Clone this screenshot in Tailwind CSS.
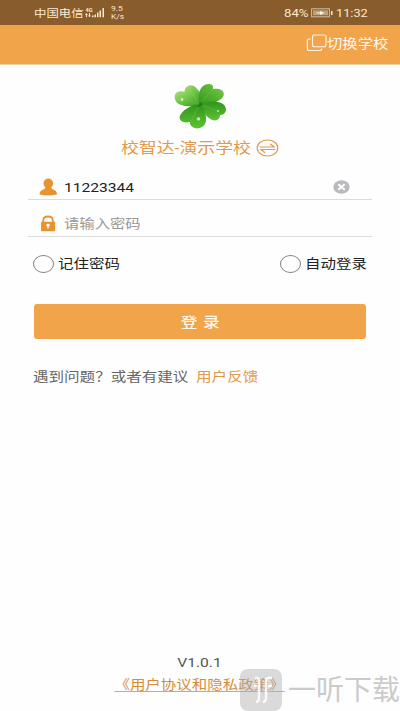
<!DOCTYPE html>
<html lang="zh-CN">
<head>
<meta charset="utf-8">
<title>登录</title>
<script src="https://cdn.jsdelivr.net/npm/@tailwindcss/browser@4"></script>
</head>
<body class="bg-white">
<div class="relative flex h-[711px] w-[400px] flex-col overflow-hidden bg-[#fefefe] font-[Roboto,'Noto_Sans_CJK_SC',sans-serif] whitespace-nowrap text-[13px]">
  <!-- Status bar -->
  <div class="flex h-[25px] shrink-0 items-center bg-[#895c2b] pl-[34px] text-[#fbe9d2]">
    <div class="w-[51px]"><span class="inline-block origin-left scale-x-[1.18] text-[10.5px] leading-4">中国电信</span></div>
    <svg class="h-[13px] w-[20px]" viewBox="0 0 20 13" fill="#fbe9d2">
      <text x="0.5" y="5.500" font-size="6" font-weight="700" font-family="Roboto" textLength="7" lengthAdjust="spacingAndGlyphs">4G</text>
      <path d="M1.4 7l1.5 2H2v2.200H1V9H0zM4.500 11.200L3 9.500h1V7h1v2.500h1zM7 9.500h1.500v1.700H7zM9.500 8.500H11v2.700H9.500zM12 6.500h1.500v4.700H12zM14.500 4.500H16v6.700h-1.500zM17.500 2H19v9.200h-1.500z"/>
    </svg>
    <div class="ml-[6px] w-[20px] text-[7px] leading-[8px]"><div class="origin-left scale-x-[1.2]">9.5</div><div class="origin-left scale-x-[1.2]">K/s</div></div>
    <div class="ml-[153px] w-[27px]"><span class="inline-block origin-left scale-x-[1.2] text-[11px]">84%</span></div>
    <svg class="h-[10px] w-[23px]" viewBox="0 0 23 10">
      <rect x="0.6" y="0.800" width="17.800" height="8" fill="none" stroke="#d5bea1"/>
      <rect x="2" y="2.300" width="15" height="5" fill="#bba07d"/>
      <path d="M5.500 4.500H9V3l4.500 2L9 7V5.500H5.500z" fill="#fff5e5"/><path d="M20 3h1.500v4H20z" fill="#fbe9d2"/>
    </svg>
    <div class="ml-[2px]"><span class="inline-block origin-left scale-x-[1.16] text-[11px]">11:32</span></div>
  </div>
  <!-- Title bar -->
  <div class="flex h-[40px] shrink-0 items-center border-b border-[#f0cf9f] bg-[#f2a44b] pb-[2px] pl-[306px] text-[#fff9ef]">
    <svg class="mb-[2px] h-[18px] w-[21px]" viewBox="0 0 21 18" fill="none" stroke="#fff6e8" stroke-width="1.1">
      <rect x="6.500" y="1" width="13.500" height="11.700" rx="2"/><path d="M4.500 5H3.200Q1.300 5 1.300 7v7.500q0 2 2 2h10.500q2 0 2-2"/>
    </svg>
    <div><span class="inline-block origin-left scale-x-[1.18] leading-5">切换学校</span></div>
  </div>
  <!-- School -->
  <div class="flex h-[66px] shrink-0 justify-center pt-[16px]">
    <svg class="h-[49px] w-[56px]" viewBox="0 0 56 49">
      <defs>
        <linearGradient id="a" x1="0" y1="0" x2="1" y2="1"><stop offset="0" stop-color="#a8df7c"/><stop offset=".5" stop-color="#6cc242"/><stop offset="1" stop-color="#34991f"/></linearGradient>
        <linearGradient id="b" x1="1" y1="0" x2="0" y2="1"><stop offset="0" stop-color="#7bcb49"/><stop offset="1" stop-color="#2f971b"/></linearGradient>
        <linearGradient id="c" x1="0" y1="0" x2="0" y2="1"><stop offset="0" stop-color="#2d951b"/><stop offset="1" stop-color="#62c235"/></linearGradient>
      </defs>
      <path d="M29 24C19 21 10 14 13 8C16 2 23 4 25 8C30 12 31 19 29 24Z" fill="url(#a)"/>
      <path d="M29 24C17 27 4 25 3 18C1 11 8 9 13 11C21 12 26 18 29 24Z" fill="url(#a)"/>
      <path d="M28 24C25 13 28 3 37 3C42 3 41 7 41 8C51 6 55 13 49 18C45 22 35 23 28 24Z" fill="url(#b)"/>
      <path d="M29 23C37 19 53 19 54 28C54 33 50 34 48 34C48 40 41 41 37 37C32 34 30 28 29 23Z" fill="url(#c)"/>
      <path d="M29 23C35 33 37 44 28 47C22 49 17 44 18 41C10 43 5 38 9 33C12 28 21 23 29 23Z" fill="url(#c)"/>
      <path d="M27 24L19 10M27 24L9 16M28 23L40 9M30 24L46 30M27 25L19 40" stroke="#9adb65" stroke-opacity=".35" stroke-width=".7"/>
      <path d="M25 26Q27 21 30 21L31 24L27 26Z" fill="#238216"/>
      <g fill="#bcebab" stroke="#eaffdf" stroke-width=".4"><circle cx="10" cy="18.500" r="1.200"/><circle cx="26.500" cy="38" r="1.400"/><circle cx="46" cy="30" r=".7"/></g>
    </svg>
  </div>
  <div class="flex h-[34px] shrink-0 items-center pl-[121px]">
    <div class="w-[135px] text-[15px] leading-5 text-[#df9a50]"><span class="inline-block origin-left scale-x-[1.19]">校智达-演示学校</span></div>
    <svg class="h-[18px] w-[23px]" viewBox="0 0 23 18" fill="none" stroke="#df9a50" stroke-width="1.200"><ellipse cx="11.500" cy="9" rx="10.300" ry="8"/><path d="M3.500 8h14.500L14 4.800M19.500 10.500H5L9 13.700"/></svg>
  </div>
  <!-- Credentials -->
  <div class="mx-[28px] mt-[10px] flex h-[25px] shrink-0 items-center border-b border-[#dcdcdc] pl-[11px] text-[#222]">
    <svg class="h-[18px] w-[19px]" viewBox="0 0 19 18" fill="#e8932f"><ellipse cx="9.300" cy="5.500" rx="4.800" ry="5"/><path d="M6.500 8h5.600q-.4 2.800 2 3.500Q18 12.500 18 16.500q-8.700 1.800-17.500 0 0-4 4-5 2.400-.7 2-3.500z"/></svg>
    <div class="ml-[6px] w-[269px] pt-[2px]"><span class="inline-block origin-left scale-x-[1.2]">11223344</span></div>
    <svg class="h-[14px] w-[17px]" viewBox="0 0 17 14"><ellipse cx="8.500" cy="7" rx="8.200" ry="6.800" fill="#b9babd"/><path d="M5.300 4.200l6.400 5.600M11.700 4.200L5.300 9.800" stroke="#fff" stroke-width="2"/></svg>
  </div>
  <div class="mx-[28px] flex h-[37px] shrink-0 items-center border-b border-[#dcdcdc] pt-[11px] pl-[12px] text-[#989898]">
    <svg class="h-[17px] w-[16px]" viewBox="0 0 16 17"><path d="M3.200 8V5.500Q3.200 1.500 8 1.500t4.800 4V8" fill="none" stroke="#e8932f" stroke-width="1.800"/><rect x="1" y="6.800" width="14.200" height="9.500" rx="1" fill="#e8932f"/><ellipse cx="8" cy="10.200" rx="1.700" ry="1.400" fill="#fff"/><path d="M7.300 10h1.400v3.500H7.300z" fill="#fff"/></svg>
    <div class="ml-[8px]"><span class="inline-block origin-left scale-x-[1.18] leading-5">请输入密码</span></div>
  </div>
  <!-- Options -->
  <div class="mt-[16px] flex h-[22px] shrink-0 items-center pl-[33px] text-[#222]">
    <span class="h-[18px] w-[21px] rounded-[50%] border border-[#828282]"></span>
    <div class="ml-[4px] w-[222px]"><span class="inline-block origin-left scale-x-[1.19] leading-5">记住密码</span></div>
    <span class="h-[18px] w-[21px] rounded-[50%] border border-[#828282]"></span>
    <div class="ml-[4px]"><span class="inline-block origin-left scale-x-[1.19] leading-5">自动登录</span></div>
  </div>
  <button class="mt-[29px] ml-[34px] flex h-[35px] w-[332px] shrink-0 items-center justify-center rounded-[3px] bg-[#f2a44b] pt-[2px] text-[14px] font-medium text-[#fff8ec]"><span class="inline-block scale-x-[1.2]">登&nbsp;<span class="ml-[1px]">录</span></span></button>
  <div class="mt-[28px] flex h-[20px] shrink-0 items-center pl-[33px] leading-5 text-[#666]">
    <div class="w-[163px]"><span class="inline-block origin-left scale-x-[1.195]">遇到问题？或者有建议</span></div>
    <div class="text-[#df9a50]"><span class="inline-block origin-left scale-x-[1.2]">用户反馈</span></div>
  </div>
  <!-- Footer -->
  <div class="mt-auto flex h-[58px] shrink-0 flex-col items-center leading-5 text-[#555]">
    <div class="h-[22px]"><span class="inline-block scale-x-[1.2]">V1.0.1</span></div>
    <div class="text-[#d58c3e]"><span class="inline-block h-[15px] scale-x-[1.19] border-b border-[#dda466] leading-[16px]">《用户协议和隐私政策》</span></div>
  </div>
  <!-- Watermark over the page -->
  <div class="absolute top-[669px] left-[240px] flex items-start">
    <svg class="h-[42px] w-[42px]" viewBox="0 0 42 42"><rect width="42" height="42" rx="8" fill="#b0b0b0" fill-opacity=".45"/><g fill="none" stroke="#fff" stroke-opacity=".85" stroke-width="2.400"><path d="M15 9h1q3 0 3 3v17q0 4-3 4M23 33q3 0 3-4V12q0-3 3-3h3M14 17h3M28 17h4"/></g></svg>
    <span class="ml-[6px] pt-[1px] text-[28px] leading-[42px] text-[#cbcbcb]">一听下载</span>
  </div>
</div>
</body>
</html>
